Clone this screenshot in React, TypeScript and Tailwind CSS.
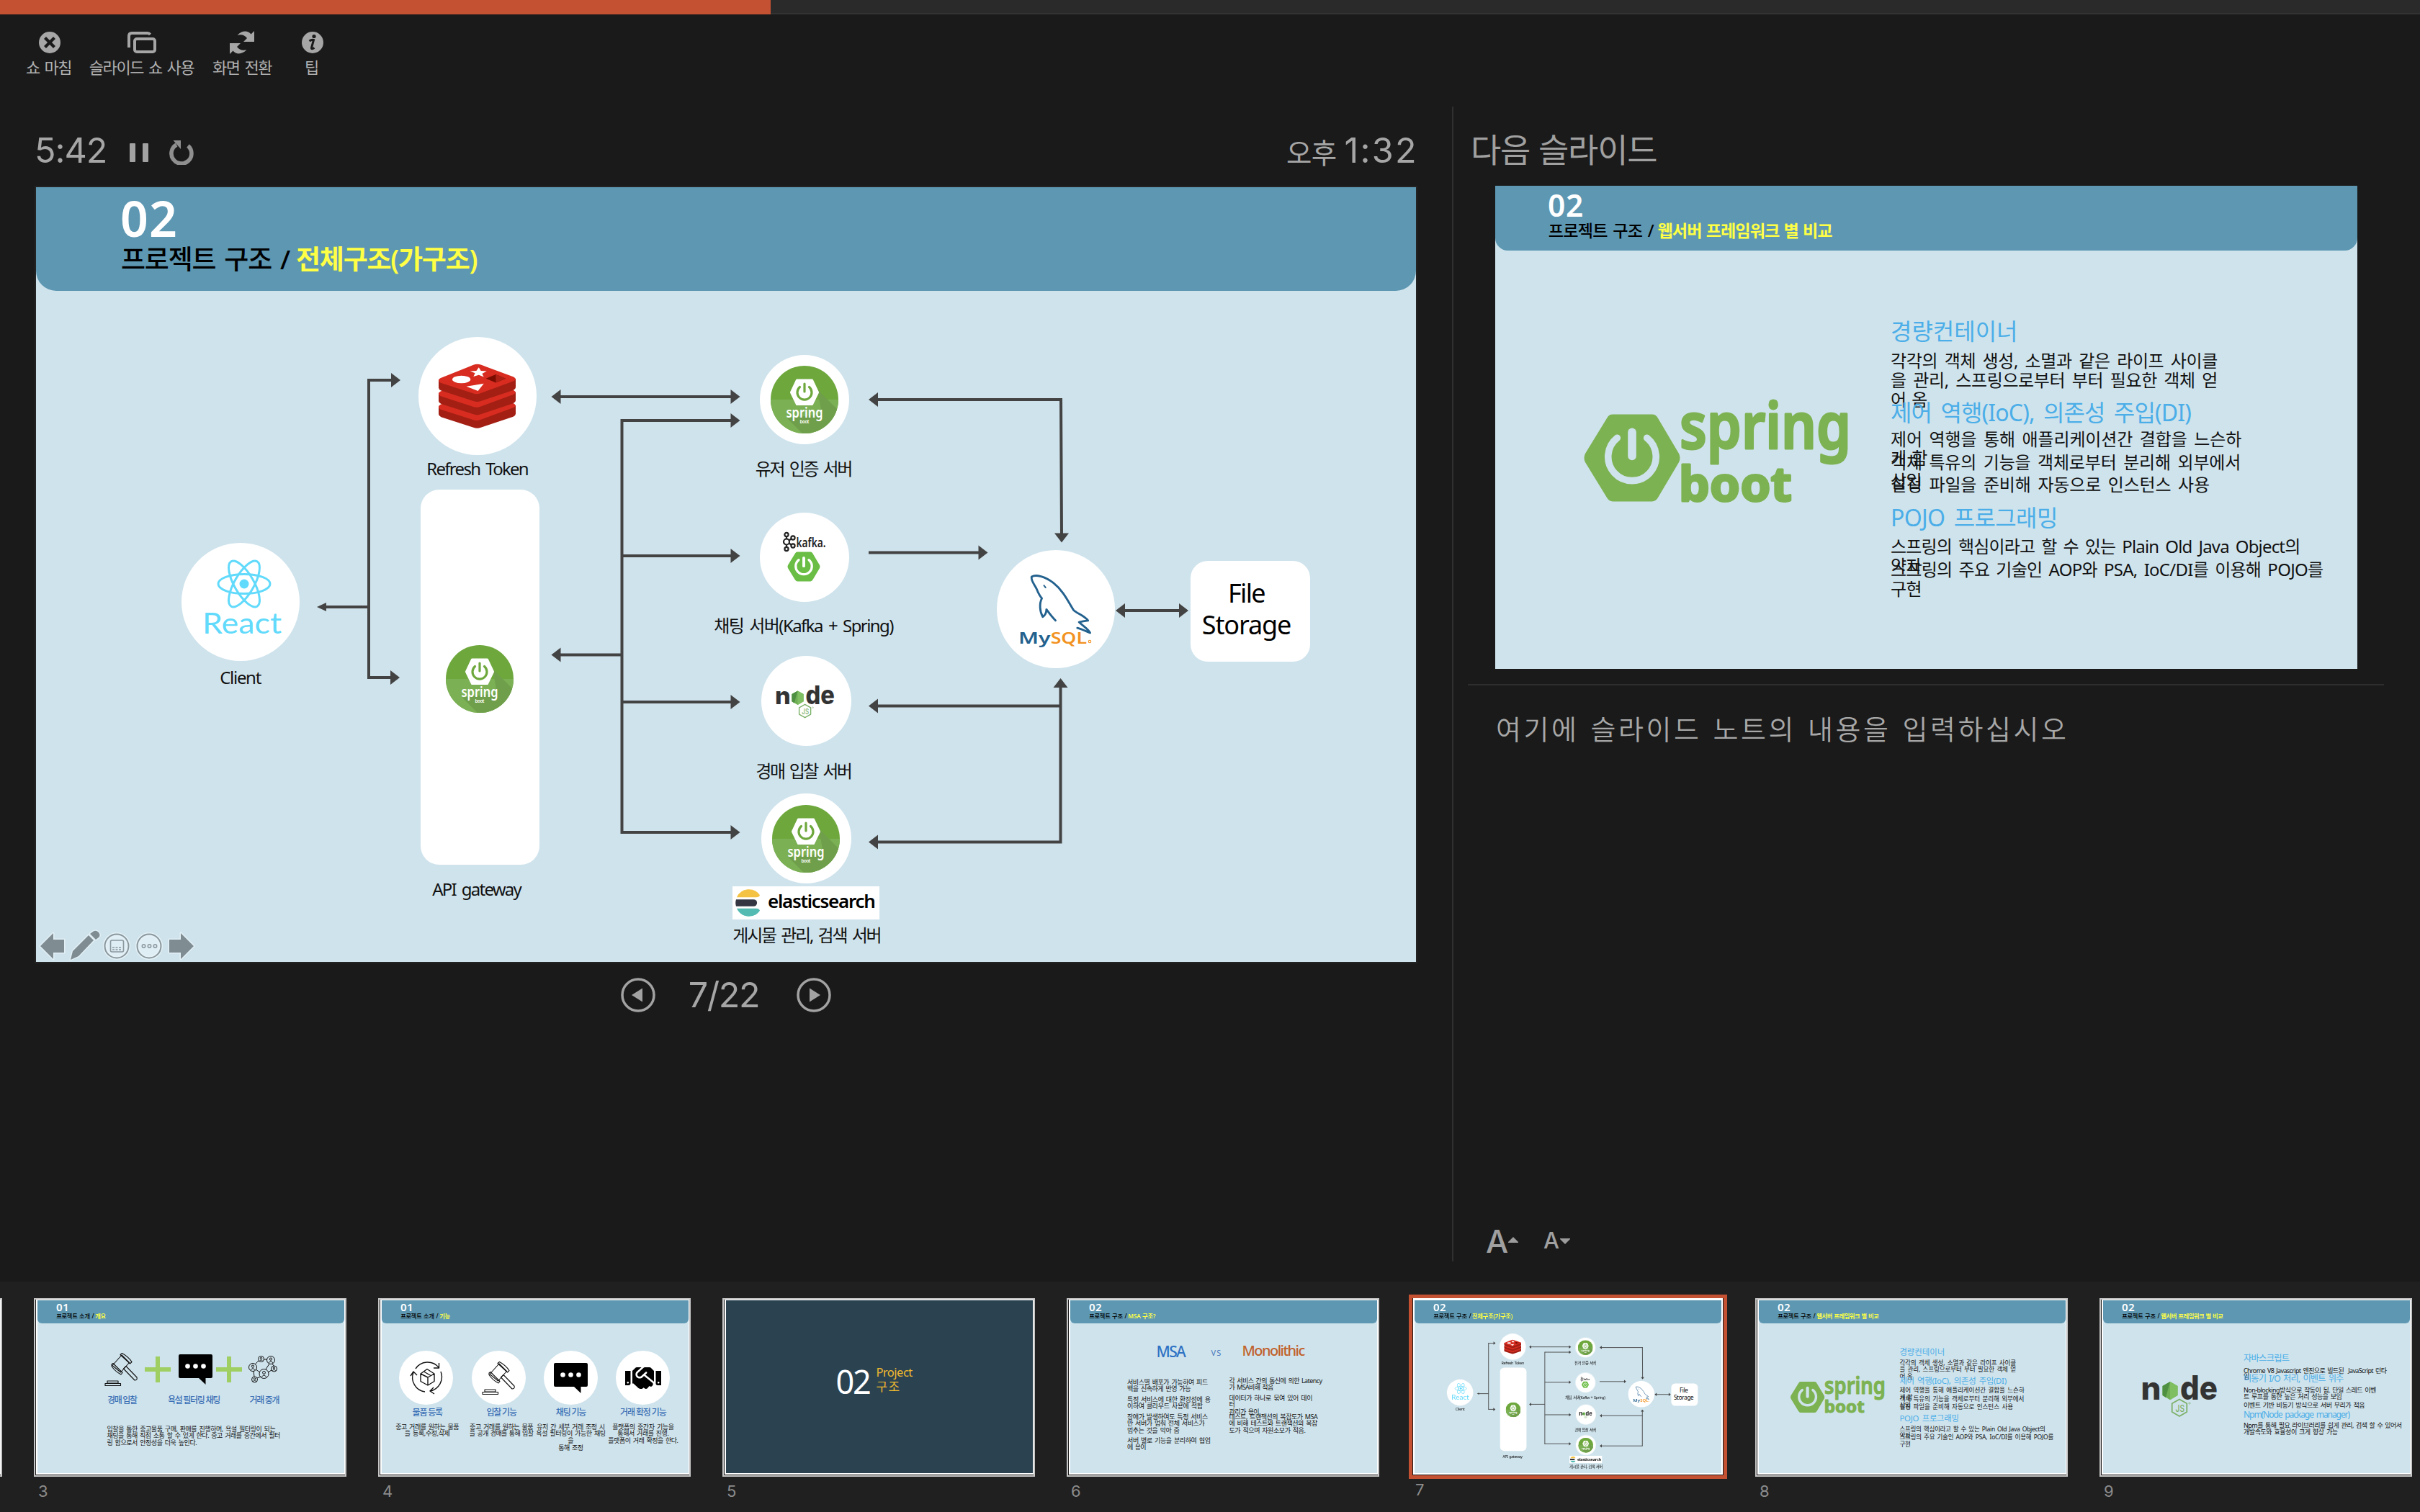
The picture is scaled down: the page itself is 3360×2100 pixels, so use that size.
import { useLayoutEffect, useRef } from "react";
import type { ReactNode } from "react";
import { FaHandshake } from "react-icons/fa";

/* Text whose letter spacing is adjusted so that it spans a given width. */
function Fit({ w, size, children, className = "" }: { w?: number; size: number; children: string; className?: string }) {
  const ref = useRef<HTMLSpanElement>(null);
  useLayoutEffect(() => {
    const el = ref.current;
    if (!el || !w) return;
    el.style.letterSpacing = "0px";
    const natural = el.offsetWidth;
    const n = Math.max(children.length - 1, 1);
    el.style.letterSpacing = children.length > 1 ? `${(w + size * 0.06 - natural) / n}px` : "0px";
  }, [w, size, children]);
  return (
    <span ref={ref} className={`inline-block shrink-0 leading-none whitespace-pre ${className}`} style={{ fontSize: size }}>
      {children}
    </span>
  );
}

/* A label on the diagram's free canvas: x is the left ink edge, y the baseline. */
function Label({ x, y, w, size, children, className = "" }: { x: number; y: number; w?: number; size: number; children: string; className?: string }) {
  return (
    <div className="absolute flex" style={{ left: x - size * 0.03, top: y - size * 0.888 }}>
      <Fit w={w} size={size} className={`[word-spacing:0.14em] ${className}`}>
        {children}
      </Fit>
    </div>
  );
}

/* A node of the diagram. */
function At({ x, y, w, h, children, className = "" }: { x: number; y: number; w: number; h: number; children?: ReactNode; className?: string }) {
  return (
    <div className={`absolute ${className}`} style={{ left: x, top: y, width: w, height: h }}>
      {children}
    </div>
  );
}

/* Lays its content out at `unit` pixels wide and draws it `w` pixels wide. */
function Scaled({ unit, w, h, children }: { unit: number; w: number; h: number; children: ReactNode }) {
  return (
    <div className="shrink-0" style={{ width: w, height: h }}>
      <div className="relative origin-top-left" style={{ width: unit, transform: `scale(${w / unit})` }}>
        {children}
      </div>
    </div>
  );
}

function Header({ w, num, title, sub, tw, sw }: { w: number; num: string; title: string; sub: string; tw: number; sw: number }) {
  return (
    <Scaled unit={1916} w={w} h={(w * 144) / 1916}>
      <div className="flex h-[144px] flex-col items-start rounded-b-[28px] bg-[#5d97b2] pt-[9px] pl-[117px]">
        <Fit w={75} size={68} className="font-semibold text-white">{num}</Fit>
        <div className="mt-[4px] flex gap-[9px] pl-px">
          <div className="flex" style={{ width: tw + 1 }}>
            <Fit w={tw} size={37} className="font-medium text-black [word-spacing:0.1em]">{title}</Fit>
          </div>
          <Fit w={sw} size={37} className="font-semibold text-[#ffff45] [word-spacing:0.05em]">{sub}</Fit>
        </div>
      </div>
    </Scaled>
  );
}

function Slide({ w, h, unit, dark = false, children }: { w: number; h: number; unit: number; dark?: boolean; children?: ReactNode }) {
  return (
    <div
      className={`shrink-0 overflow-hidden font-['Noto_Sans','Noto_Sans_CJK_KR',sans-serif] ${dark ? "bg-[#2b4351]" : "bg-[#cfe3ec]"}`}
      style={{ width: w, height: h }}
    >
      <Scaled unit={unit} w={w} h={h}>{children}</Scaled>
    </div>
  );
}

/* ---------- logos ---------- */

function SpringBadge() {
  return (
    <svg viewBox="-47 -47 94 94" className="block h-full w-full">
      <defs>
        <clipPath id="badge"><circle r="47" /></clipPath>
      </defs>
      <g clipPath="url(#badge)">
        <rect x="-47" y="-47" width="94" height="94" fill="#6ea83d" />
        <rect x="-47" y="0" width="94" height="47" fill="#7bb055" />
        <path d="M18-14 L60 28 L60 60 L10 60 L-24 26 L24 20Z" fill="#6f9f4b" />
      </g>
      <path d="M-10.5-27 L10.5-27 L18.5-10 L10.5 6.5 L-10.5 6.5 L-18.5-10Z" fill="#fff" stroke="#fff" strokeWidth="3" strokeLinejoin="round" />
      <path d="M-6.5-17.5 A10 10 0 1 0 6.500-17.500" fill="none" stroke="#6ea83d" strokeWidth="3.200" strokeLinecap="round" />
      <path d="M0-22 V-11" stroke="#6ea83d" strokeWidth="3.200" strokeLinecap="round" />
      <text x="-25.500" y="24.500" fontSize="19" fontWeight="600" fill="#fff" textLength="51" lengthAdjust="spacingAndGlyphs">spring</text>
      <text x="-6.500" y="32.500" fontSize="6.500" fontWeight="600" fill="#fff" textLength="13">boot</text>
    </svg>
  );
}

function SpringHex({ fg, bg }: { fg: string; bg: string }) {
  return (
    <svg viewBox="0 0 135 123" className="block h-full w-full">
      <path d="M41 4 L95 4 Q99 4 101 8 L130 57 Q132 61.500 130 66 L101 115 Q99 119 95 119 L41 119 Q37 119 35 115 L5 66 Q3 61.500 5 57 L35 8 Q37 4 41 4Z" fill={fg} stroke={fg} strokeWidth="5" />
      <path d="M47 34 A33 33 0 1 0 88 34" fill="none" stroke={bg} strokeWidth="9.500" strokeLinecap="round" />
      <path d="M67.500 26 V59" stroke={bg} strokeWidth="11.500" strokeLinecap="round" />
    </svg>
  );
}

function SpringWords() {
  return (
    <svg viewBox="257 290 240 160" className="mt-[200px] -ml-px h-[160px] w-[240px] overflow-visible" fill="#7db252" stroke="#7db252" strokeLinejoin="round">
      <text x="256" y="364.500" fontSize="89" fontWeight="600" strokeWidth="3" textLength="238" lengthAdjust="spacingAndGlyphs">spring</text>
      <text x="255" y="437.500" fontSize="66" fontWeight="700" strokeWidth="3" textLength="157" lengthAdjust="spacingAndGlyphs">boot</text>
    </svg>
  );
}

function Redis() {
  return (
    <svg viewBox="0 0 186 156" className="block h-full w-full">
      {[64, 32, 0].map((dy) => (
        <g key={dy} transform={`translate(0 ${dy})`}>
          <path d="M0 38 V58 Q0 62 6 65 L84 90 Q93 94 102 90 L180 64 Q186 61 186 57 V36 L93 70Z" fill="#a31f14" />
          <path d="M4 35 L84 3 Q93-1 103 3 L181 32 Q190 37 181 42 L102 71 Q93 75 84 72 L4 46 Q-4 40 4 35Z" fill="#d82c20" />
        </g>
      ))}
      <path d="M97 9 L102 17 L116 18 L105 24 L109 32 L97 27 L84 31 L88 23 L76 18 L91 17Z" fill="#fff" />
      <ellipse cx="55" cy="38" rx="22" ry="9" fill="#fff" />
      <path d="M67 55 L109 48 L95 66Z" fill="#fff" />
      <path d="M114 36 L138 26 L162 36 L138 46Z" fill="#7a0c00" />
      <path d="M138 26 L162 36 L138 46Z" fill="#ad2115" />
    </svg>
  );
}

function ReactLogo() {
  return (
    <svg viewBox="-56 -40 112 116" className="block h-full w-full overflow-visible">
      <g fill="none" stroke="#61dafb" strokeWidth="3">
        <ellipse rx="36" ry="13.500" />
        <ellipse rx="36" ry="13.500" transform="rotate(60)" />
        <ellipse rx="36" ry="13.500" transform="rotate(120)" />
      </g>
      <circle r="6.500" fill="#61dafb" />
      <text x="-58" y="68.500" fontFamily="Lato" fontSize="40" fill="#61dafb" textLength="110" lengthAdjust="spacingAndGlyphs">React</text>
    </svg>
  );
}

function MySql() {
  return (
    <svg viewBox="790 615 180 190" className="block h-full w-full overflow-visible">
      <g transform="translate(820 624)" fill="none" stroke="#23618e" strokeWidth="5" strokeLinejoin="round" strokeLinecap="round">
        <path d="M2 5 C12-2 36 5 55 20 C80 40 90 64 104 86 C112 94 128 98 139 111 C130 112 124 113 117 115 C126 124 138 130 144 141 C134 137 124 132 113 129" />
        <path d="M2 5 C0 14 8 22 14 34 C18 44 22 52 27 57 C20 70 22 90 29 102 C34 99 38 94 38 84 C44 92 50 101 60 111" />
        <path d="M32 26 L36 31" strokeWidth="3.500" />
      </g>
      <text x="790" y="791" fontFamily="Noto Sans" fontSize="38" fontWeight="600" fill="#23618e" textLength="78" lengthAdjust="spacingAndGlyphs">My</text>
      <text x="868" y="791" fontFamily="Noto Sans" fontSize="38" fontWeight="600" fill="#f29221" textLength="88" lengthAdjust="spacingAndGlyphs">SQL</text>
      <circle cx="963" cy="786" r="3" fill="none" stroke="#f29221" strokeWidth="2" />
    </svg>
  );
}

function NodeLogo() {
  return (
    <svg viewBox="0 0 103 63" className="block h-full w-full overflow-visible">
      <text x="-2.500" y="38.500" fontFamily="Inter" fontWeight="800" fontSize="43" fill="#333" textLength="28" lengthAdjust="spacingAndGlyphs">n</text>
      <path d="M38 14 L48.500 20 V33 L38 39.300 L27.500 33 V20Z" fill="#6fae55" />
      <path d="M38 14 L48.500 20 V33 L38 39.300Z" fill="#7fbf62" />
      <path d="M38 14 L27.500 20 V33 L32 36Z" fill="#4f8f42" />
      <text x="52" y="38.500" fontFamily="Inter" fontWeight="800" fontSize="46" fill="#333" textLength="52" lengthAdjust="spacingAndGlyphs">de</text>
      <path d="M51 38.500 L61.300 44.300 V56 L51 62 L40.700 56 V44.300Z" fill="none" stroke="#7cb068" strokeWidth="1.800" strokeLinejoin="round" />
      <text x="45.500" y="55.500" fontFamily="Inter" fontSize="13" fontWeight="500" fill="#7cb068" textLength="12.500" lengthAdjust="spacingAndGlyphs">JS</text>
      <circle cx="65" cy="44" r="1.200" fill="none" stroke="#7cb068" strokeWidth=".6" />
    </svg>
  );
}

function Kafka() {
  return (
    <svg viewBox="0 0 60 30" className="block h-full w-full overflow-visible">
      <g fill="none" stroke="#222" strokeWidth="2.200">
        <circle cx="5" cy="4.500" r="2.600" />
        <circle cx="5" cy="14.500" r="4" />
        <circle cx="5" cy="24.500" r="2.600" />
        <circle cx="14" cy="9" r="2.600" />
        <circle cx="14" cy="20" r="2.600" />
        <path d="M5 7 V10.500 M5 18.500 V22 M8.500 12.500 L11.500 10.500 M8.500 16.500 L11.500 18.500" />
      </g>
      <text x="18.500" y="21.500" fontFamily="Noto Sans" fontSize="17" fontWeight="600" fill="#222" textLength="41" lengthAdjust="spacingAndGlyphs">kafka.</text>
    </svg>
  );
}

function Elastic() {
  return (
    <svg viewBox="0 0 36 40" className="h-10 w-[35px]">
      <path d="M2 12 A19 19 0 0 1 35 9 Q34 12 30 12Z" fill="#f5c344" />
      <path d="M1 15 H26 A5 5 0 0 1 26 25 H1 Q-.5 20 1 15Z" fill="#343741" />
      <path d="M2 28 H30 Q34 28 35 31 A19 19 0 0 1 2 28Z" fill="#54bbb2" />
    </svg>
  );
}

/* ---------- architecture diagram ---------- */

type Head = [number, number, "l" | "r" | "u" | "d"];

const lines = [
  "M462 268 V681 M460 268 H496 M460 681 H494 M462 583 H398",
  "M725 291 H968 M813.500 324 H968 M813.500 322 V898 M813.500 512 H968 M813.500 715 H968 M811.500 896 H968 M813.500 649.500 H725",
  "M1168 295 H1424 M1423 293 L1424 485 M1156 507.500 H1312 M1168 720.500 H1423 M1168 909.500 H1424.500 M1422.500 909 V692 M1510 588 H1590",
];

const heads: Head[] = [
  [506, 268, "r"], [505, 681, "r"], [715.5, 291, "l"], [977.5, 291, "r"], [977.5, 324, "r"],
  [977.5, 512, "r"], [977.5, 715, "r"], [977.5, 896, "r"], [715.5, 649.5, "l"], [1156, 295, "l"],
  [1424, 493.5, "d"], [1321.5, 507.5, "r"], [1156, 720.5, "l"], [1156, 909.5, "l"], [1422.5, 682, "u"],
  [1499, 588, "l"], [1600, 588, "r"],
];

const angle = { r: 0, d: 90, l: 180, u: 270 };

function Arrows() {
  return (
    <svg viewBox="0 0 1916 1076" className="absolute top-0 left-0 h-[1076px] w-[1916px]">
      {lines.map((d) => (
        <path key={d} d={d} fill="none" stroke="#434343" strokeWidth="4" />
      ))}
      <path d="M390 583 L403 577 V589Z" fill="#434343" />
      {heads.map(([x, y, dir]) => (
        <path key={`${x}-${y}`} d="M0 0 L-13-10 V10Z" fill="#434343" transform={`translate(${x} ${y}) rotate(${angle[dir]})`} />
      ))}
    </svg>
  );
}

const nodes = [
  { cx: 284, cy: 576, r: 82 },
  { cx: 613, cy: 290, r: 82 },
  { cx: 1067, cy: 294.5, r: 62 },
  { cx: 1067, cy: 513.5, r: 62 },
  { cx: 1069, cy: 713.5, r: 62.5 },
  { cx: 1069, cy: 904, r: 62.5 },
  { cx: 1415.5, cy: 586, r: 82 },
];

const labels = [
  { t: "Client", x: 256, y: 690, w: 57 },
  { t: "Refresh Token", x: 543, y: 400, w: 141 },
  { t: "API gateway", x: 551, y: 984, w: 123 },
  { t: "유저 인증 서버", x: 999.5, y: 400, w: 134.5 },
  { t: "채팅 서버(Kafka + Spring)", x: 942, y: 618.5, w: 249 },
  { t: "경매 입찰 서버", x: 1000, y: 820, w: 133.5 },
  { t: "게시물 관리, 검색 서버", x: 968, y: 1048.5, w: 206 },
];

function SlideDiagram({ w, h }: { w: number; h: number }) {
  return (
    <Slide w={w} h={h} unit={1916}>
      <Header w={1916} num="02" title="프로젝트 구조 /" sub="전체구조(가구조)" tw={233} sw={250} />
      {nodes.map((c) => (
        <At key={`${c.cx}-${c.cy}`} x={c.cx - c.r} y={c.cy - c.r} w={c.r * 2} h={c.r * 2} className="rounded-full bg-white" />
      ))}
      <Arrows />
      <At x={533.5} y={420} w={165} h={521} className="flex flex-col items-center rounded-[26px] bg-white pt-[216px]">
        <div className="h-[94px] w-[94px]"><SpringBadge /></div>
      </At>
      <At x={233} y={511} w={112} h={116}><ReactLogo /></At>
      <At x={559} y={244} w={107} h={92}><Redis /></At>
      <At x={1020} y={248} w={94} h={94}><SpringBadge /></At>
      <At x={1021.5} y={857.5} w={94} h={94}><SpringBadge /></At>
      <At x={1037} y={477.5} w={60} h={30}><Kafka /></At>
      <At x={1043} y={506} w={46} h={42}><SpringHex fg="#6abd45" bg="#ffffff" /></At>
      <At x={1027.5} y={688} w={80} h={50}><NodeLogo /></At>
      <At x={1363.5} y={533} w={103} h={109}><MySql /></At>
      <At x={967} y={971} w={204} h={46} className="flex items-center gap-[10px] bg-white pl-1">
        <Elastic />
        <Fit w={148} size={26} className="mb-[6px] font-semibold text-black">elasticsearch</Fit>
      </At>
      {labels.map((l) => (
        <Label key={l.t} x={l.x} y={l.y} w={l.w} size={24} className="text-[#111]">{l.t}</Label>
      ))}
      <At x={1603} y={519} w={166} h={140} className="flex flex-col items-center rounded-[24px] bg-white pt-[27px] pr-[11px]">
        <Fit w={51} size={36} className="text-black">File</Fit>
        <Fit w={122} size={36} className="mt-2 text-black">Storage</Fit>
      </At>
    </Slide>
  );
}

/* ---------- text slides ---------- */

/* One line of a slide's text: its words, its width, the distance to the next line, and its kind. */
type Row = [text: string, width: number, pitch: number, head?: boolean];

function Rows({ rows, size, headSize = size, className = "" }: { rows: Row[]; size: number; headSize?: number; className?: string }) {
  return (
    <div className={`flex shrink-0 flex-col ${className}`}>
      {rows.map(([t, w, pitch, head], i) => (
        <div key={i} className="flex" style={{ height: pitch }}>
          <Fit w={w} size={head ? headSize : size} className={head ? "[word-spacing:0.15em] text-[#4baee8]" : "[word-spacing:0.15em] text-[#111]"}>
            {t}
          </Fit>
        </div>
      ))}
    </div>
  );
}

const springRows: Row[] = [
  ["경량컨테이너", 175, 44.6, true],
  ["각각의 객체 생성, 소멸과 같은 라이프 사이클", 453, 26.5],
  ["을 관리, 스프링으로부터 부터 필요한 객체 얻", 453, 27.5],
  ["어 옴", 50, 13.9],
  ["제어 역행(IoC), 의존성 주입(DI)", 416, 40.6, true],
  ["제어 역행을 통해 애플리케이션간 결합을 느슨하", 486, 26.5],
  ["게 함", 50, 5.5],
  ["객체 특유의 기능을 객체로부터 분리해 외부에서", 485, 26.5],
  ["삽입", 42, 4.5],
  ["설정 파일을 준비해 자동으로 인스턴스 사용", 442, 42.4],
  ["POJO 프로그래밍", 230, 44.1, true],
  ["스프링의 핵심이라고 할 수 있는 Plain Old Java Object의", 568, 27],
  ["약자", 42, 5],
  ["스프링의 주요 기술인 AOP와 PSA, IoC/DI를 이용해 POJO를", 600, 26.5],
  ["구현", 42, 26.5],
];

function SlideSpring({ w, h }: { w: number; h: number }) {
  return (
    <Slide w={w} h={h} unit={1197}>
      <Header w={1197} num="02" title="프로젝트 구조 /" sub="웹서버 프레임워크 별 비교" tw={233} sw={387} />
      <div className="flex items-start pl-[121.500px]">
        <div className="mt-[226px] h-[124px] w-[136px]"><SpringHex fg="#7db252" bg="#cfe3ec" /></div>
        <SpringWords />
        <Rows rows={springRows} size={24} headSize={32} className="mt-[96.500px] ml-[52.500px]" />
      </div>
    </Slide>
  );
}

const nodeRows: Row[] = [
  ["자바스크립트", 63, 17.2, true],
  ["Chrome V8 Javascript 엔진으로 빌드된  JavaScript 런타", 198, 8.5],
  ["임", 8, 2.3],
  ["비동기 I/O 처리, 이벤트 위주", 139, 17, true],
  ["Non-blocking방식으로 작동이 됨. 단일 스레드 이벤", 184, 9],
  ["트 루프를 통한 높은 처리 성능을 보임", 136, 11.7],
  ["이벤트 기반 비동기 방식으로 서버 무리가 적음", 167.5, 11.8],
  ["Npm(Node package manager)", 147, 16.5, true],
  ["Npm를 통해 필요 라이브러리를 쉽게 관리, 검색 할 수 있어서", 220, 9],
  ["개발속도와 효율성이 크게 향상 가능", 130.5, 9],
];

function SlideNode() {
  return (
    <Slide w={426} h={240} unit={426}>
      <Header w={426} num="02" title="프로젝트 구조 /" sub="웹서버 프레임워크 별 비교" tw={233} sw={387} />
      <div className="flex items-start pl-[55.500px]">
        <div className="mt-[67px] h-[63px] w-[103px]"><NodeLogo /></div>
        <Rows rows={nodeRows} size={9} headSize={12.2} className="mt-[43.300px] ml-[37px]" />
      </div>
    </Slide>
  );
}

const msaRows: Row[] = [
  ["서비스별 배포가 가능하여 피드", 112, 9],
  ["백을 신속하게 반영 가능", 88, 14.8],
  ["특정 서비스에 대한 환장성에 용", 115, 9],
  ["이하여 클라우드 사용에 적합", 104, 15.2],
  ["장애가 발생하여도 특정 서비스", 112, 9],
  ["만 서버가 멈춰 전체 서비스가", 107, 10],
  ["멈추는 것을 막아 줌", 72, 14],
  ["서버 별로 기능을 분리하여 협업", 115, 9],
  ["에 용이", 26.5, 9],
];

const monolithicRows: Row[] = [
  ["각 서비스 간의 통신에 의한 Latency", 129, 9],
  ["가 MSA비해 적음", 61.5, 15],
  ["데이터가 하나로 묶여 있어 데이", 115, 9],
  ["터", 8, 9.8],
  ["관리가 용이", 41.5, 7.2],
  ["테스트, 트랜잭션의 복잡도가 MSA", 123, 9],
  ["에 비해 테스트와 트랜잭션의 복잡", 122.5, 10],
  ["도가 적으며 자원소모가 적음.", 106, 9],
];

function SlideMsa() {
  return (
    <Slide w={426} h={240} unit={426}>
      <Header w={426} num="02" title="프로젝트 구조 /" sub="MSA 구조?" tw={233} sw={170} />
      <div className="flex h-[75px] items-start pt-[29px] pl-[120px]">
        <div className="flex w-[76px]"><Fit w={40.5} size={21} className="font-medium text-[#2f72c4]">MSA</Fit></div>
        <div className="flex w-[43px]"><Fit w={13.5} size={11} className="mt-[5.500px] text-[#4a78bb]">VS</Fit></div>
        <Fit w={87} size={20} className="-mt-px font-medium text-[#c0622b]">Monolithic</Fit>
      </div>
      <div className="grid grid-cols-[141.500px_auto] pl-[79.500px]">
        <Rows rows={msaRows} size={9} className="mt-[2px]" />
        <Rows rows={monolithicRows} size={9} />
      </div>
    </Slide>
  );
}

function SlideSection() {
  return (
    <Slide w={426} h={240} unit={426} dark>
      <div className="flex items-start gap-[9px] pt-[90px] pl-[153px]">
        <Fit w={46} size={45} className="text-white">02</Fit>
        <div className="-mt-px flex flex-col items-start gap-[3px] pt-[2.500px] text-[#f0b92e]">
          <Fit w={50} size={16.5}>Project</Fit>
          <Fit w={31.5} size={17}>구조</Fit>
        </div>
      </div>
    </Slide>
  );
}

/* ---------- intro slide icons ---------- */

function Gavel() {
  return (
    <svg viewBox="0 0 46 46" className="h-[46px] w-[46px]" fill="none" stroke="#111" strokeWidth="1.100" strokeLinejoin="round">
      <path d="M11 17.500 L24 3 L34.500 13.500 L22.500 27Z" />
      <path d="M10 16 L12 14.500 L25 27.500 L23 30 Q15 26 10 18.500Z" />
      <path d="M22 2.500 L24.500 .5 Q33 5 38 12.500 L35.500 15Z" />
      <path d="M26.500 22 L30 18.500 L45 34 Q46 38 42 38Z" />
      <path d="M4 39 H19 V42 H4Z M1 42.500 H22.500 V45.500 H1Z" />
    </svg>
  );
}

function Chat() {
  return (
    <svg viewBox="0 0 47 42" className="h-[42px] w-[47px]">
      <path d="M2 0 H45 Q47 0 47 2 V31 Q47 33 45 33 H37.500 V42 L28 33 H2 Q0 33 0 31 V2 Q0 0 2 0Z" fill="#000" />
      <circle cx="12.500" cy="16.500" r="3.300" fill="#fff" />
      <circle cx="23.500" cy="16.500" r="3.300" fill="#fff" />
      <circle cx="34.500" cy="16.500" r="3.300" fill="#fff" />
    </svg>
  );
}

const people = [[17.5, 5.5, 4], [31, 7, 5.5], [6, 17, 5.5], [21.5, 26, 6.5], [35.5, 19, 4], [8.5, 34, 4]];

function Network() {
  return (
    <svg viewBox="0 0 41 39" className="h-[39px] w-[41px]" fill="none" stroke="#111" strokeWidth="1">
      <path d="M21 6 H26 M14 8 L9 13 M10 20 L16 24 M7 22 L8 30 M12 32 L17 30 M24 20 L29 12 M33 12 L35 15 M27 24 L32 21" />
      {people.map(([x, y, r]) => (
        <g key={x}>
          <circle cx={x} cy={y} r={r} />
          <circle cx={x} cy={y - r * 0.25} r={r * 0.3} />
          <path d={`M${x - r * 0.5} ${y + r * 0.7} Q${x} ${y - r * 0.1} ${x + r * 0.5} ${y + r * 0.7}`} />
        </g>
      ))}
    </svg>
  );
}

function Plus() {
  return (
    <svg viewBox="0 0 36 36" className="h-9 w-9">
      <path d="M15 0 H21 V15 H36 V21 H21 V36 H15 V21 H0 V15 H15Z" fill="#9fce62" />
    </svg>
  );
}

function BoxCycle() {
  return (
    <svg viewBox="0 0 46 46" className="h-[46px] w-[46px]" fill="none" stroke="#111" strokeWidth="1.400" strokeLinejoin="round">
      <path d="M24 10.500 L34 17 V27.500 L25 33 L15 27.500 V17Z M15 17 L25 22 L34 17 M25 22 V33 M19.500 14 L29 19.500" />
      <path d="M8 10 A20 20 0 0 1 40 8 M40.500 2 V9 H33" />
      <path d="M43 14 A20 20 0 0 1 28 41 M34 45 L28 41 L33 36" />
      <path d="M21 42 A20 20 0 0 1 5 15 M1 20 L5 14 L10 19" />
    </svg>
  );
}

const introRows: Row[] = [
  ["입찰을 통한 중고물품 구매, 판매를 진행하며, 욕설 필터링이 되는", 234, 9],
  ["채팅을 통해 직접 소통 할 수 있게 한다. 중고 거래를 중간에서 필터", 240, 10],
  ["링 함으로서 안정성을 더욱 높인다.", 124.5, 10],
];

function SlideIntro() {
  return (
    <Slide w={426} h={240} unit={426}>
      <Header w={426} num="01" title="프로젝트 소개 /" sub="개요" tw={233} sw={64} />
      <div className="flex items-center pt-[40.500px] pl-[93px]">
        <Gavel />
        <div className="mr-[10.500px] ml-[10.500px]"><Plus /></div>
        <Chat />
        <div className="mr-[9px] ml-[5px]"><Plus /></div>
        <Network />
      </div>
      <div className="mt-[14px] grid grid-cols-[84px_113.500px_auto] pl-[97.500px] font-medium text-[#3a6fb5]">
        <div className="flex"><Fit w={41} size={12}>경매 입찰</Fit></div>
        <div className="flex"><Fit w={73} size={12}>욕설 필터링 채팅</Fit></div>
        <div className="flex"><Fit w={41} size={12}>거래 중개</Fit></div>
      </div>
      <Rows rows={introRows} size={9} className="mt-[29.500px] pl-[97px]" />
    </Slide>
  );
}

const features: { icon: ReactNode; title: string; tw: number; rows: Row[]; pad: string }[] = [
  {
    icon: <BoxCycle />, title: "물품 등록", tw: 41.5, pad: "pl-[3px]",
    rows: [["중고 거래를 원하는 물품", 88, 9], ["을 등록,수정,삭제", 62, 10]],
  },
  {
    icon: <Gavel />, title: "입찰 기능", tw: 41.5, pad: "pl-[8px]",
    rows: [["중고 거래를 원하는 물품", 88, 9], ["을 공개 경매를 통해 입찰", 89, 10]],
  },
  {
    icon: <Chat />, title: "채팅 기능", tw: 41.5, pad: "",
    rows: [["유저 간 세부 거래 조정 시", 94, 9], ["욕설 필터링이 가능한 채팅", 96, 10], ["을", 8, 10], ["통해 조정", 34.5, 10]],
  },
  {
    icon: <FaHandshake className="h-[50px] w-[50px] text-black" />, title: "거래 확정 기능", tw: 63.5, pad: "",
    rows: [["플랫폼의 중간자 기능을", 85, 9], ["통해서 거래를 진행.", 71, 10], ["플랫폼이 거래 확정을 한다.", 97.5, 10]],
  },
];

function SlideFeatures() {
  return (
    <Slide w={426} h={240} unit={426}>
      <Header w={426} num="01" title="프로젝트 소개 /" sub="기능" tw={233} sw={64} />
      <div className="flex pt-[38px] pl-[12px]">
        {features.map((f) => (
          <div key={f.title} className="flex w-[100.400px] shrink-0 flex-col items-center">
            <div className="flex h-[75px] w-[75px] items-center justify-center rounded-full bg-white">{f.icon}</div>
            <div className={`flex flex-col items-center ${f.pad}`}>
              <Fit w={f.tw} size={12} className="mt-[5px] font-medium text-[#3a6fb5]">{f.title}</Fit>
              <Rows rows={f.rows} size={9} className="mt-[8.500px] items-center" />
            </div>
          </div>
        ))}
      </div>
    </Slide>
  );
}

/* ---------- presenter chrome ---------- */

function ToolButton({ label, w, icon, className = "" }: { label: string; w: number; icon: ReactNode; className?: string }) {
  return (
    <div className={`flex flex-col items-center ${className}`} style={{ width: w }}>
      <div className="flex h-8 items-center">{icon}</div>
      <Fit w={w} size={22} className="mt-[8px] text-[#b0b0b0] [word-spacing:0.1em]">{label}</Fit>
    </div>
  );
}

function Toolbar() {
  return (
    <div className="flex h-[128px] items-start pt-[23px] pl-9">
      <ToolButton label="쇼 마침" w={63} icon={
        <svg viewBox="0 0 30 30" className="ml-0.5 h-[30px] w-[30px]">
          <circle cx="15" cy="15" r="15" fill="#a6a6a6" />
          <path d="M8.500 8.500 L21.500 21.500 M21.500 8.500 L8.500 21.500" stroke="#1a1a1a" strokeWidth="4.200" />
        </svg>
      } />
      <ToolButton label="슬라이드 쇼 사용" w={145} className="ml-[25px]" icon={
        <svg viewBox="0 0 40 30" className="h-[30px] w-[40px]" fill="none" stroke="#a6a6a6" strokeWidth="4">
          <rect x="10" y="10" width="28" height="18" rx="3" />
          <path d="M2 22 V6 Q2 2 6 2 H28 Q30 2 31.500 4" />
        </svg>
      } />
      <ToolButton label="화면 전환" w={82} className="ml-[26px]" icon={
        <svg viewBox="0 0 34 32" className="h-[32px] w-[34px]" fill="#a6a6a6">
          <path d="M10.500 6 C17-1 25-1 29.500 4.500 L34 0 V15 H19 L24 10 C21 6 16 4 10.500 6Z" />
          <path d="M23.500 26 C17 33 9 33 4.500 27.500 L0 32 V17 H15 L10 22 C13 26 18 28 23.500 26Z" />
        </svg>
      } />
      <ToolButton label="팁" w={20} className="ml-[46px]" icon={
        <svg viewBox="0 0 30 30" className="ml-0.5 h-[30px] w-[30px] shrink-0">
          <circle cx="15" cy="15" r="15" fill="#a6a6a6" />
          <circle cx="17" cy="6.500" r="2.600" fill="#1a1a1a" />
          <path d="M10.500 13 Q14 10.500 16.500 11.500 Q15 17 13.500 22.500 Q13.200 25 17.500 22.500" fill="none" stroke="#1a1a1a" strokeWidth="3" />
        </svg>
      } />
    </div>
  );
}

function SlideControls() {
  return (
    <svg viewBox="0 0 236 52" className="absolute bottom-0 left-0 h-[52px] w-[236px]">
      <g stroke="#e3f0f6" strokeWidth="3" paintOrder="stroke" fill="#7f8c92" strokeLinejoin="round">
        <path d="M6 30 L24 12 V21 H39 V39 H24 V48Z" />
        <path d="M48 49 L51 37 L73 15 L80 22 L59 44Z" />
        <path d="M75 13 L79 10 Q83 7 87 11 Q90 15 87 18 L83 21Z" />
        <path d="M219 30 L201 12 V21 H185 V39 H201 V48Z" />
      </g>
      <g fill="#dfedf4" stroke="#e3f0f6" strokeWidth="6">
        <circle cx="112" cy="30" r="16" />
        <circle cx="157" cy="30" r="16" />
      </g>
      <g fill="none" stroke="#8a979d" strokeWidth="2">
        <circle cx="112" cy="30" r="16.500" />
        <circle cx="157" cy="30" r="16.500" />
        <rect x="103.500" y="22" width="18" height="16" rx="2" strokeWidth="1.600" />
        <path d="M106 32 H119 M106 35 H119" strokeWidth="1.400" strokeDasharray="3 1.500" />
        <circle cx="149.500" cy="30" r="2.200" strokeWidth="1.500" />
        <circle cx="157.500" cy="30" r="2.200" strokeWidth="1.500" />
        <circle cx="165.500" cy="30" r="2.200" strokeWidth="1.500" />
      </g>
    </svg>
  );
}

function CurrentPane() {
  return (
    <div className="flex w-[2016px] shrink-0 flex-col px-[50px] text-[#a6a6a6]">
      <div className="flex h-[112px] items-start">
        <Fit w={98} size={48.5} className="mt-[37px] -ml-[2px]">5:42</Fit>
        <div className="mt-[51px] ml-[32px] flex gap-[10px]">
          <div className="h-[26px] w-2 rounded-[1px] bg-[#a2a2a2]" />
          <div className="h-[26px] w-2 rounded-[1px] bg-[#a2a2a2]" />
        </div>
        <svg viewBox="0 0 34 34" className="mt-[47px] ml-[29px] h-[34px] w-[34px]">
          <path d="M10 5.500 A14 14 0 1 0 26 7" transform="translate(0 .5)" fill="none" stroke="#8f8f8f" strokeWidth="5.600" />
          <path d="M5.500 0 H16 V12Z" fill="#8f8f8f" />
        </svg>
        <div className="ml-auto flex items-start">
          <Fit w={68} size={38.5} className="mt-[46px]">오후</Fit>
          <Fit w={97} size={48.5} className="mt-[37px] -mr-[3px] ml-[11px]">1:32</Fit>
        </div>
      </div>
      <div className="relative outline-2 outline-[#232323]">
        <SlideDiagram w={1916} h={1076} />
        <SlideControls />
      </div>
      <div className="flex justify-center pt-[22px]">
        <svg viewBox="0 0 48 48" className="h-12 w-12">
          <circle cx="24" cy="24" r="22" fill="none" stroke="#a2a2a2" strokeWidth="3.500" />
          <path d="M15 24 L30 14.500 V33.500Z" fill="#a2a2a2" />
        </svg>
        <Fit w={97} size={48.5} className="ml-[46px]">7/22</Fit>
        <svg viewBox="0 0 48 48" className="ml-[52px] h-12 w-12">
          <circle cx="24" cy="24" r="22" fill="none" stroke="#a2a2a2" strokeWidth="3.500" />
          <path d="M33 24 L18 14.500 V33.500Z" fill="#a2a2a2" />
        </svg>
      </div>
    </div>
  );
}

function NextPane() {
  return (
    <div className="flex h-[1604px] flex-1 flex-col pr-[50px] pl-5 text-[#a0a0a0]">
      <div className="h-[110px] pt-[37px] pl-1">
        <Fit w={257} size={46}>다음 슬라이드</Fit>
      </div>
      <div className="pl-[38px]">
        <SlideSpring w={1197} h={671} />
      </div>
      <div className="mt-[21px] h-0.5 bg-[#2e2e2e]" />
      <div className="flex-1 pt-[42px] pl-[39px]">
        <Fit w={790} size={38} className="font-[350] text-[#a8a8a8] [word-spacing:0.05em]">여기에 슬라이드 노트의 내용을 입력하십시오</Fit>
      </div>
      <div className="flex h-[56px] items-start pl-[25px]">
        <Fit size={44} className="mt-[6px] w-[31px] font-medium">A</Fit>
        <svg viewBox="0 0 14 8" className="mt-[22px] h-2 w-3.5"><path d="M0 8 V7 L7 0 L14 7 V8Z" fill="#9c9c9c" /></svg>
        <Fit size={31} className="mt-[11px] ml-[35px] w-[23px] font-medium">A</Fit>
        <svg viewBox="0 0 14 8" className="mt-[24px] h-2 w-3.5"><path d="M0 0 V1 L7 8 L14 1 V0Z" fill="#9c9c9c" /></svg>
      </div>
    </div>
  );
}

function Thumb({ n, active = false, children }: { n: number; active?: boolean; children: ReactNode }) {
  return (
    <div className="w-[434px] shrink-0">
      <div className={active ? "mr-0 mb-[2px] ml-[2px] h-[246px] bg-[#1a1a1a] outline-5 outline-[#c55133]" : "h-[248px] border-2 border-[#c6c6c6] bg-[#1a1a1a]"}>
        <div className={active ? "flex h-[245px] w-[430px] translate-x-px border-2 border-white bg-white pt-px" : "ml-px flex h-[243px] justify-center border-x-2 border-t border-b-2 border-white"}>
          {children}
        </div>
      </div>
      <div className="mt-[9px] pl-[6px] text-[#8c8c8c]">
        <Fit size={22}>{String(n)}</Fit>
      </div>
    </div>
  );
}

export default function App() {
  return (
    <div className="flex h-[2100px] w-[3360px] flex-col overflow-hidden bg-[#1a1a1a] font-['Inter','Noto_Sans_CJK_KR',sans-serif]">
      <div className="flex h-5 border-b-2 border-[#333] bg-[#2a2a2a]">
        <div className="h-5 w-[1070px] bg-[#c55133]" />
      </div>
      <Toolbar />
      <div className="flex h-[1632px]">
        <CurrentPane />
        <div className="h-[1604px] w-0.5 bg-[#303030]" />
        <NextPane />
      </div>
      <div className="flex h-[320px] gap-[44px] bg-[#202020] pt-[23px]">
        <div className="ml-[-431px] h-[248px] overflow-hidden">
          <Thumb n={2}><Slide w={426} h={240} unit={426} /></Thumb>
        </div>
        <Thumb n={3}><SlideIntro /></Thumb>
        <Thumb n={4}><SlideFeatures /></Thumb>
        <Thumb n={5}><SlideSection /></Thumb>
        <Thumb n={6}><SlideMsa /></Thumb>
        <Thumb n={7} active><SlideDiagram w={426} h={240} /></Thumb>
        <Thumb n={8}><SlideSpring w={426} h={240} /></Thumb>
        <Thumb n={9}><SlideNode /></Thumb>
      </div>
    </div>
  );
}
